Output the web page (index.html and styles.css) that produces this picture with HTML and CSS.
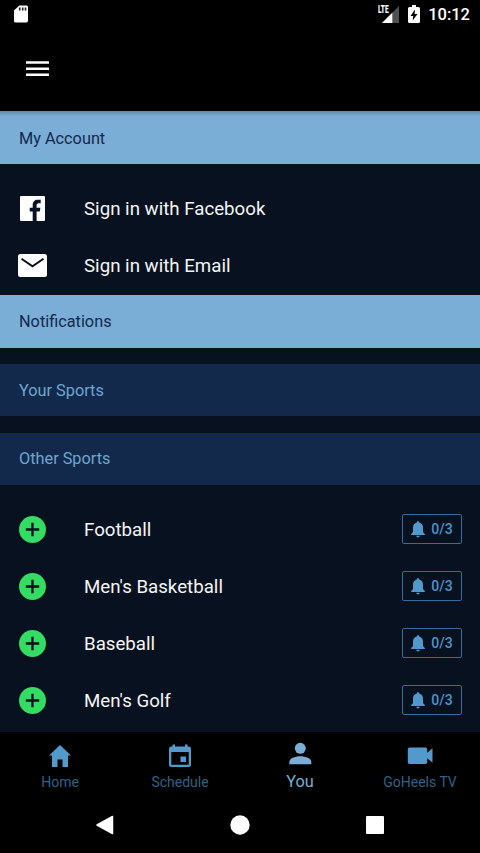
FILE: index.html
```html
<!DOCTYPE html>
<html lang="en">
<head>
<meta charset="utf-8">
<title>You</title>
<link rel="stylesheet" href="styles.css">
</head>
<body>
<svg class="defs" aria-hidden="true">
  <symbol id="add" viewBox="0 0 27 27"><circle cx="13.5" cy="13.5" r="13.5" fill="#34dc64"/><path d="M13.5 6.8v13.4M6.8 13.5h13.4" stroke="#08111f" stroke-width="2.3"/></symbol>
  <symbol id="bell" viewBox="0 0 14 17"><path d="M7 .3c.8 0 1.200.5 1.200 1.300 2.500.6 3.800 2.500 3.800 5v4.400l1.800 2V14H.2v-1L2 11V6.600c0-2.500 1.300-4.400 3.800-5C5.800.8 6.200.3 7 .3zM5.300 14.800h3.400c0 1-.7 1.700-1.700 1.700s-1.700-.7-1.700-1.700z"/></symbol>
</svg>
<div class="app">
  <div class="status">
    <svg class="sd" width="14" height="18" viewBox="0 0 14 18"><path d="M5.300.5H12.500Q14 .5 14 2v13.500q0 2-1.500 2h-11Q0 17.500 0 16V5.500z" fill="#fff"/><path d="M5.700 2.500v3M8.700 2.500v3M11.500 2.500v3" stroke="#222" stroke-width="1.600"/></svg>
    <div class="signal"><span class="lte">LTE</span><svg width="17" height="17" viewBox="0 0 17 17"><path d="M17 0v17H0z" fill="#505050"/><path d="M10.300 6.700V17H0z" fill="#fff"/></svg></div>
    <svg class="battery" width="12" height="18" viewBox="0 0 12 18"><path d="M4 0h4v2h2.500Q12 2 12 3.500v13q0 1.500-1.500 1.500h-9Q0 18 0 16.500v-13Q0 2 1.500 2H4z" fill="#fff"/><path d="M7 4.500 2.500 11H5.200L4.700 15.500 9.500 9H6.700z" fill="#000"/></svg>
    <span class="clock">10:12</span>
  </div>
  <header class="toolbar"><svg width="23" height="16" viewBox="0 0 23 16"><path d="M0 1.500h23M0 7.800h23M0 13.800h23" stroke="#fff" stroke-width="2.500"/></svg></header>
  <main>
    <h2 class="section light first">My Account</h2>
    <div class="accounts">
      <div class="row"><svg class="lead facebook" width="25" height="25" viewBox="0 0 25 25"><rect width="25" height="25" rx="1.300" fill="#fff"/><path d="M12.700 25v-9.600H9.700v-3.700h3V9.200c0-3.500 2-5.400 5.100-5.400h2.900v3.500h-2c-1.500 0-2.100.7-2.100 2v2.400h3.800l-.6 3.700h-3.200V25z" fill="#08111f"/></svg><span>Sign in with Facebook</span></div>
      <div class="row"><svg class="lead mail" width="29" height="23" viewBox="0 0 29 23"><rect width="29" height="23" rx="2.500" fill="#fff"/><path d="m3.500 4.700 11 7.600 11-7.600" fill="none" stroke="#08111f" stroke-width="2"/></svg><span>Sign in with Email</span></div>
    </div>
    <h2 class="section light">Notifications</h2>
    <h2 class="section dark yours">Your Sports</h2>
    <h2 class="section dark others">Other Sports</h2>
    <div class="sports">
      <div class="row"><svg class="lead add"><use href="#add"/></svg><span>Football</span><button class="alerts"><svg><use href="#bell"/></svg>0/3</button></div>
      <div class="row"><svg class="lead add"><use href="#add"/></svg><span>Men's Basketball</span><button class="alerts"><svg><use href="#bell"/></svg>0/3</button></div>
      <div class="row"><svg class="lead add"><use href="#add"/></svg><span>Baseball</span><button class="alerts"><svg><use href="#bell"/></svg>0/3</button></div>
      <div class="row"><svg class="lead add"><use href="#add"/></svg><span>Men's Golf</span><button class="alerts"><svg><use href="#bell"/></svg>0/3</button></div>
    </div>
  </main>
  <nav class="tabs">
    <a class="tab"><svg viewBox="0 0 28 28"><path d="M14 3 25 13.500h-3V25h-5.500v-7.500h-5V25H6V13.500H3z"/></svg><span>Home</span></a>
    <a class="tab"><svg viewBox="0 0 28 28"><path fill-rule="evenodd" d="M6.500 2.500h2.500v2h10v-2h2.500v2h1Q25 4.500 25 7v15.500q0 2.500-2.500 2.500h-17Q3 25 3 22.500V7q0-2.500 2.500-2.500h1zM5.300 10v12.800h17.400V10zM14.500 14.500h5.500V20h-5.500z"/></svg><span>Schedule</span></a>
    <a class="tab active"><svg viewBox="0 0 28 28"><circle cx="14.300" cy="9.300" r="5.500"/><path d="M3.300 25.200v-2.300c0-3.400 5.600-5.600 11-5.600s11 2.200 11 5.600v2.300z"/></svg><span>You</span></a>
    <a class="tab"><svg viewBox="0 0 28 28"><path d="M3.500 5.500h16q1.700 0 1.700 1.700v3.600l5.300-4.600v14.600l-5.300-4.600v4.100q0 1.700-1.700 1.700h-16q-1.700 0-1.700-1.700V7.200q0-1.700 1.700-1.700z"/></svg><span>GoHeels TV</span></a>
  </nav>
  <div class="system">
    <svg viewBox="0 0 20 20"><path d="M17.500 1.500v17L2 10z" stroke="#fff" stroke-width="1.500" stroke-linejoin="round"/></svg>
    <svg viewBox="0 0 20 20"><circle cx="10" cy="10" r="9.700"/></svg>
    <svg viewBox="0 0 20 20"><rect x="1" y="1" width="18" height="18" rx="1"/></svg>
  </div>
</div>
</body>
</html>
```

FILE: styles.css
```css
* { box-sizing: border-box; }
body { margin: 0; background: #000; font-family: Roboto, sans-serif; }
svg { display: block; flex: none; }
.defs { display: none; }
.app { width: 480px; height: 853px; display: flex; flex-direction: column; overflow: hidden; }
.status { height: 28px; display: flex; align-items: center; padding: 0 10px 0 14px; color: #fff; flex: none; }
.signal { position: relative; margin-left: auto; margin-right: 9px; }
.signal svg { margin-right: -1px; }
.lte { position: absolute; left: -4px; top: -1px; font: 900 10px/10px Roboto, sans-serif; transform: scaleX(.65); transform-origin: left; }
.battery { margin-right: 8px; margin-left: 1px; }
.clock { font-size: 16.500px; font-weight: 500; line-height: 28px; padding-top: 2px; }
.toolbar { height: 83px; flex: none; padding: 33px 26px; }
main { flex: none; height: 621px; background: #08111f; }
.section { margin: 0; height: 52px; padding: 1px 19px 0; font-size: 16.300px; line-height: 52px; font-weight: 400; }
.light { background: #7aaed6; color: #14284f; height: 53px; }
.first { padding-top: 2px; line-height: 51px; background: linear-gradient(#5d86a5, #7aaed6 5px); }
.dark { background: #13294b; color: #6ea6d0; }
.yours { margin-top: 16px; }
.others { margin-top: 17px; padding-top: 0; }
.accounts { height: 131px; padding-top: 16px; }
.sports { padding-top: 15.500px; }
.row { height: 57.100px; display: flex; align-items: center; padding: 0 18px 0 19px; font-size: 18.700px; color: #f5f5f5; }
.row span { white-space: nowrap; }
.sports .row span { padding-top: 1px; }
.lead { margin-right: 38px; }
.facebook { margin-left: 1px; margin-right: 39px; }
.mail { margin-left: -.6px; margin-right: 36.600px; }
.add { width: 27px; height: 27px; }
.alerts { width: 60px; height: 30px; margin-left: auto; padding: 0; display: flex; align-items: center; justify-content: center; gap: 6px; border: 1.500px solid #376c96; border-radius: 2px; background: none; color: #4d94c8; font: 500 14px/16px Roboto, sans-serif; }
.alerts svg { width: 14px; height: 17px; fill: #5298cb; }
.tabs { display: grid; grid-template-columns: repeat(4, 1fr); height: 65px; flex: none; padding-top: 10px; }
.tab { display: flex; flex-direction: column; align-items: center; font-size: 14px; line-height: 18px; color: #326187; }
.tab svg { width: 28px; height: 28px; margin-bottom: 3px; fill: #5499cb; }
.tab.active { margin-top: -3px; font-size: 16.300px; color: #7aaed6; }
.tab.active svg { margin-bottom: 6px; fill: #7aaed6; }
.system { display: flex; justify-content: space-between; padding: 18px 95px; height: 56px; fill: #fff; }
.system svg { width: 20px; height: 20px; }
```
